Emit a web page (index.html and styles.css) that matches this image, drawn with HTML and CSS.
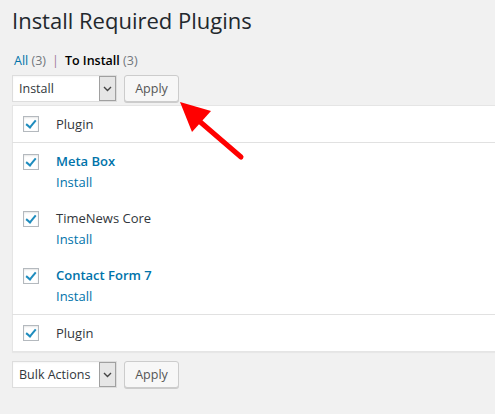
FILE: index.html
```html
<!DOCTYPE html>
<html>
<head>
<meta charset="utf-8">
<link rel="stylesheet" href="styles.css">
</head>
<body>
<div class="wrap">
  <h1 class="title">Install Required Plugins</h1>
  <ul class="subsubsub">
    <li><a class="link" href="#">All</a> <span class="count">(3)</span></li>
    <li class="sep">|</li>
    <li><span class="current">To Install</span> <span class="count">(3)</span></li>
  </ul>
  <div class="tablenav top">
    <div class="select"><span class="select-label">Install</span><span class="select-btn"><svg width="9" height="6" viewBox="0 0 9 6"><path d="M1 1 L4.5 4.5 L8 1" fill="none" stroke="#444" stroke-width="1.4"/></svg></span></div>
    <button class="button">Apply</button>
  </div>
  <table class="plugins">
    <thead>
      <tr><td class="cb"><span class="check"></span></td><td class="name">Plugin</td></tr>
    </thead>
    <tbody>
      <tr><td class="cb"><span class="check"></span></td><td class="name"><a class="strong" href="#">Meta Box</a><a class="action" href="#">Install</a></td></tr>
      <tr><td class="cb"><span class="check"></span></td><td class="name"><span class="plain">TimeNews Core</span><a class="action" href="#">Install</a></td></tr>
      <tr><td class="cb"><span class="check"></span></td><td class="name"><a class="strong" href="#">Contact Form 7</a><a class="action" href="#">Install</a></td></tr>
    </tbody>
    <tfoot>
      <tr><td class="cb"><span class="check"></span></td><td class="name">Plugin</td></tr>
    </tfoot>
  </table>
  <div class="tablenav bottom">
    <div class="select"><span class="select-label">Bulk Actions</span><span class="select-btn"><svg width="9" height="6" viewBox="0 0 9 6"><path d="M1 1 L4.5 4.5 L8 1" fill="none" stroke="#444" stroke-width="1.4"/></svg></span></div>
    <button class="button">Apply</button>
  </div>
</div>
<svg class="arrow" width="80" height="70" viewBox="0 0 80 70">
  <line x1="28" y1="25" x2="71" y2="62" stroke="#ff0000" stroke-width="5" stroke-linecap="round"/>
  <polygon points="10,7 41,16 22,37" fill="#ff0000"/>
</svg>
</body>
</html>
```
FILE: styles.css
```css
html, body {
  margin: 0;
  padding: 0;
  background: #f1f1f1;
}
body {
  font-family: "Open Sans", "Noto Sans", sans-serif;
  font-size: 13px;
  color: #444;
  position: relative;
  height: 414px;
  overflow: hidden;
}
.wrap {
  padding: 0 0 0 12px;
}
.title {
  margin: 0;
  padding: 6px 0 0;
  font-size: 22px;
  font-weight: 400;
  line-height: 29px;
  color: #23282d;
}
.subsubsub {
  list-style: none;
  margin: 16px 0 0 2px;
  padding: 0;
  display: flex;
  gap: 6px;
  font-size: 12.5px;
  line-height: 20px;
  color: #666;
}
.subsubsub li { display: block; }
.link { color: #0073aa; text-decoration: none; }
.count { color: #72777c; }
.sep { color: #a27e9c; }
.current { color: #000; font-weight: 600; }
.tablenav {
  display: flex;
  gap: 7px;
  align-items: flex-start;
}
.tablenav.top { margin-top: 4px; height: 30px; }
.tablenav.bottom { margin-top: 9px; }
.select {
  width: 103px;
  height: 25px;
  border: 1px solid #ddd;
  background: #fff;
  display: flex;
  justify-content: space-between;
  box-shadow: inset 0 1px 2px rgba(0,0,0,0.04);
}
.select-label {
  padding-left: 6px;
  line-height: 25px;
  font-size: 12.5px;
  color: #32373c;
}
.select-btn {
  width: 15px;
  height: 23px;
  margin: 0;
  border: 1px solid #a0a0a0;
  background: #e6e6e6;
  display: flex;
  align-items: center;
  justify-content: center;
}
.button {
  width: 55px;
  height: 27px;
  margin: 0;
  padding: 0;
  border: 1px solid #ccc;
  border-radius: 3px;
  background: #f7f7f7;
  box-shadow: 0 1px 0 #ccc;
  font-family: inherit;
  font-size: 12.5px;
  color: #555;
  line-height: 25px;
}
.plugins {
  width: calc(100% + 2px);
  border-collapse: collapse;
  background: #fff;
  border: 1px solid #e5e5e5;
  box-shadow: 0 1px 1px rgba(0,0,0,0.04);
}
.plugins td { padding: 0; vertical-align: top; }
.cb { width: 33px; padding-left: 10px !important; }
.check {
  display: block;
  width: 14px;
  height: 14px;
  border: 1px solid #b4b9be;
  background: #fff;
  position: relative;
  box-shadow: inset 0 1px 2px rgba(0,0,0,0.1);
}
.check::after {
  content: "";
  position: absolute;
  left: 4px;
  top: 1px;
  width: 4px;
  height: 8px;
  border-right: 2.5px solid #1e8cbe;
  border-bottom: 2.5px solid #1e8cbe;
  transform: rotate(40deg);
}
thead td, tfoot td { height: 36px; vertical-align: middle !important; }
thead tr { border-bottom: 1px solid #e1e1e1; }
tfoot tr { border-top: 1px solid #e1e1e1; }
thead td.name, tfoot td.name { color: #32373c; font-size: 13px; }
tbody .cb { padding-top: 11px !important; }
tbody td.name { padding: 8px 0 7px; height: 42px; }
.name a, .name span { display: block; line-height: 21px; text-decoration: none; }
.strong { color: #0073aa; font-weight: 600; }
.plain { color: #32373c; }
.action { color: #0073aa; }
.arrow {
  position: absolute;
  left: 170px;
  top: 95px;
}
```
